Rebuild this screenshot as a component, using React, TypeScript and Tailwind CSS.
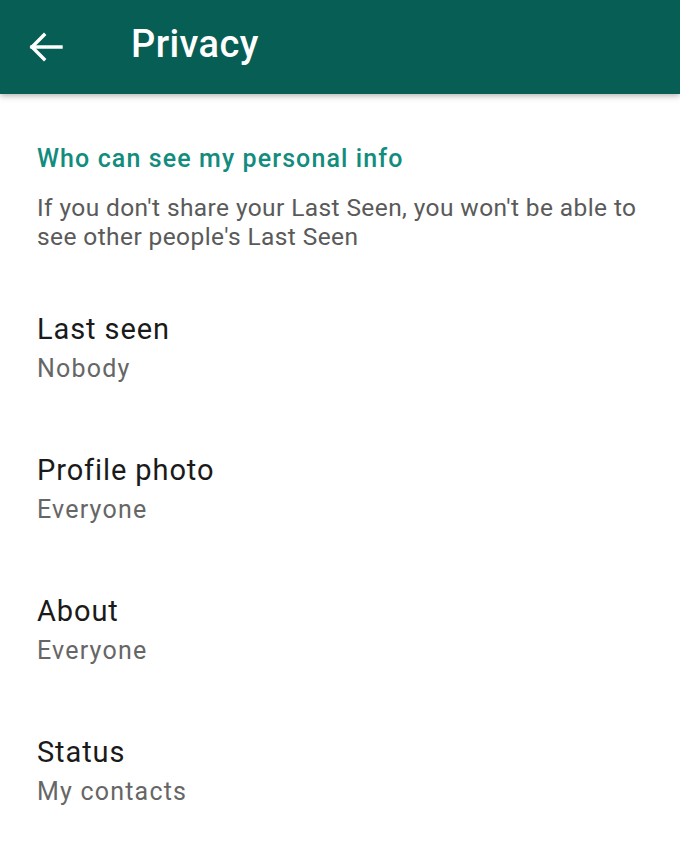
import React from "react";

const items = [
  { title: "Last seen", value: "Nobody" },
  { title: "Profile photo", value: "Everyone" },
  { title: "About", value: "Everyone" },
  { title: "Status", value: "My contacts" },
];

export default function App() {
  return (
    <div className="w-[680px] h-[849px] bg-white overflow-hidden font-['Roboto',sans-serif]">
      <header className="h-[94px] bg-[#075e54] flex items-center shadow-[0_2px_6px_rgba(0,0,0,0.3)] relative z-10">
        <div className="w-[131px] flex pl-[29px]">
          <svg width="34" height="30" viewBox="0 0 34 30" fill="none" stroke="white" strokeWidth="3.4" strokeLinecap="square">
            <path d="M3 15H32" />
            <path d="M15 3L3 15L15 27" />
          </svg>
        </div>
        <h1 className="text-white text-[38px] tracking-[0.4px] font-medium leading-none pb-[6px]">Privacy</h1>
      </header>

      <section className="px-[37px] pt-[51px]">
        <h2 className="text-[#128c7e] text-[25px] tracking-[1.1px] font-medium leading-[28px]">Who can see my personal info</h2>
        <p className="mt-[20px] text-[#5a5a5a] text-[24.5px] tracking-[0.4px] leading-[29px]">
          If you don't share your Last Seen, you won't be able to see other people's Last Seen
        </p>
      </section>

      <ul className="px-[37px] pt-[60px]">
        {items.map((it) => (
          <li key={it.title} className="h-[141px]">
            <div className="text-[#1a1a1a] text-[29px] tracking-[0.9px] leading-[36px]">{it.title}</div>
            <div className="text-[#666] text-[25px] tracking-[1.2px] leading-[32px] mt-[6px]">{it.value}</div>
          </li>
        ))}
      </ul>
    </div>
  );
}
